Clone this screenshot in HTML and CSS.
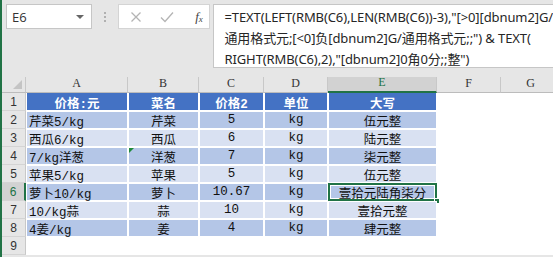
FILE: index.html
```html
<!DOCTYPE html>
<html>
<head>
<meta charset="utf-8">
<link rel="stylesheet" href="styles.css">
</head>
<body>
<div class="app">
  <div class="fbar">
    <div class="namebox"><span class="ref">E6</span><span class="caret"></span></div>
    <div class="dots"><i></i><i></i><i></i></div>
    <div class="btns">
      <svg class="ic" width="12" height="12" viewBox="0 0 12 12"><path d="M1.5 1.5L10.5 10.5M10.5 1.5L1.5 10.5" stroke="#b4b4b4" stroke-width="1.3" fill="none"/></svg>
      <svg class="ic" width="14" height="12" viewBox="0 0 14 12"><path d="M1 6.5L5 10.5L13 1.5" stroke="#b4b4b4" stroke-width="1.3" fill="none"/></svg>
      <span class="fx">f<sub>x</sub></span>
    </div>
    <div class="formula">
      <div>=TEXT(LEFT(RMB(C6),LEN(RMB(C6))-3),"[&gt;0][dbnum2]G/</div>
      <div>通用格式元;[&lt;0]负[dbnum2]G/通用格式元;;") &amp; TEXT(</div>
      <div>RIGHT(RMB(C6),2),"[dbnum2]0角0分;;整")</div>
    </div>
  </div>
  <div class="sheet">
    <div class="ch corner"><span class="tri"></span></div>
    <div class="ch">A</div><div class="ch">B</div><div class="ch">C</div><div class="ch">D</div><div class="ch sel">E</div><div class="ch">F</div><div class="ch">G</div>

    <div class="rh">1</div>
    <div class="c hd">价格:元</div><div class="c hd">菜名</div><div class="c hd">价格2</div><div class="c hd">单位</div><div class="c hd">大写</div><div class="c"></div><div class="c"></div>

    <div class="rh">2</div>
    <div class="c dk l">芹菜5/kg</div><div class="c dk">芹菜</div><div class="c dk">5</div><div class="c dk">kg</div><div class="c dk">伍元整</div><div class="c"></div><div class="c"></div>

    <div class="rh">3</div>
    <div class="c lt l">西瓜6/kg</div><div class="c lt">西瓜</div><div class="c lt">6</div><div class="c lt">kg</div><div class="c lt">陆元整</div><div class="c"></div><div class="c"></div>

    <div class="rh">4</div>
    <div class="c dk l">7/kg洋葱</div><div class="c dk err">洋葱</div><div class="c dk">7</div><div class="c dk">kg</div><div class="c dk">柒元整</div><div class="c"></div><div class="c"></div>

    <div class="rh">5</div>
    <div class="c lt l">苹果5/kg</div><div class="c lt">苹果</div><div class="c lt">5</div><div class="c lt">kg</div><div class="c lt">伍元整</div><div class="c"></div><div class="c"></div>

    <div class="rh sel">6</div>
    <div class="c dk l">萝卜10/kg</div><div class="c dk">萝卜</div><div class="c dk">10.67</div><div class="c dk">kg</div><div class="c dk active">壹拾元陆角柒分<span class="handle"></span></div><div class="c"></div><div class="c"></div>

    <div class="rh">7</div>
    <div class="c lt l">10/kg蒜</div><div class="c lt">蒜</div><div class="c lt">10</div><div class="c lt">kg</div><div class="c lt">壹拾元整</div><div class="c"></div><div class="c"></div>

    <div class="rh">8</div>
    <div class="c dk l">4姜/kg</div><div class="c dk">姜</div><div class="c dk">4</div><div class="c dk">kg</div><div class="c dk">肆元整</div><div class="c"></div><div class="c"></div>

    <div class="rh">9</div>
    <div class="c"></div><div class="c"></div><div class="c"></div><div class="c"></div><div class="c"></div><div class="c"></div><div class="c"></div>
  </div>
</div>
</body>
</html>
```
FILE: styles.css
```css
* { box-sizing: border-box; }
html, body { margin: 0; padding: 0; }
body {
  width: 553px;
  height: 257px;
  overflow: hidden;
  background: #e6e6e6;
  border-left: 2px solid #217346;
  font-family: "Noto Sans", sans-serif;
}
.app { display: flex; flex-direction: column; }
.fbar {
  height: 77px;
  display: flex;
  align-items: flex-start;
  padding: 4px 0 0 4px;
}
.namebox {
  width: 90px;
  height: 25px;
  background: #fff;
  border: 1px solid #c6c6c6;
  display: flex;
  align-items: center;
  justify-content: space-between;
  padding: 0 7px 0 5px;
}
.ref { font-family: "Open Sans", sans-serif; font-size: 13px; color: #333; }
.caret {
  width: 0; height: 0;
  border-left: 4px solid transparent;
  border-right: 4px solid transparent;
  border-top: 4px solid #666;
}
.dots {
  width: 28px;
  height: 25px;
  display: flex;
  flex-direction: column;
  align-items: center;
  justify-content: center;
  gap: 2px;
}
.dots i { display: block; width: 2px; height: 2px; background: #b0b0b0; }
.btns {
  width: 97px;
  height: 25px;
  background: #fff;
  border: 1px solid #d4d4d4;
  display: flex;
  align-items: center;
  padding-left: 11px;
  gap: 18px;
}
.fx {
  font-family: "Liberation Serif", serif;
  font-style: italic;
  font-size: 13px;
  color: #444;
  margin-left: 3px;
}
.fx sub { font-size: 9px; vertical-align: -1px; }
.formula {
  margin-left: 3px;
  flex: 1;
  height: 64px;
  background: #fff;
  border: 1px solid #c6c6c6;
  border-right: none;
  padding: 2px 0 0 10px;
  font-family: "Noto Sans", "Noto Sans CJK SC", sans-serif;
  font-size: 13px;
  letter-spacing: -0.1px;
  line-height: 21px;
  color: #262626;
  white-space: nowrap;
}
.sheet {
  display: grid;
  grid-template-columns: 24px 102px 71px 65px 64px 109px 64px 60px;
  grid-template-rows: 16px repeat(9, 18px);
  background: #fff;
}
.ch {
  background: #e6e6e6;
  font-family: "Liberation Serif", serif;
  font-size: 12px;
  color: #333;
  display: flex;
  align-items: flex-end;
  justify-content: center;
  padding-bottom: 1px;
  border-right: 1px solid #c8c8c8;
  border-bottom: 1px solid #bcbcbc;
}
.ch.sel {
  background: #d2d2d2;
  color: #217346;
  border-bottom: 2px solid #217346;
}
.corner { position: relative; }
.tri {
  position: absolute;
  right: 3px; bottom: 3px;
  width: 0; height: 0;
  border-left: 9px solid transparent;
  border-bottom: 9px solid #c4c4c4;
}
.rh {
  background: #e6e6e6;
  font-family: "Liberation Sans", sans-serif;
  font-size: 12px;
  color: #333;
  display: flex;
  align-items: center;
  justify-content: center;
  border-right: 1px solid #c8c8c8;
  border-bottom: 1px solid #d4d4d4;
}
.rh.sel {
  background: #d2d2d2;
  color: #217346;
  border-right: 2px solid #217346;
}
.c {
  font-family: "Liberation Mono", "Noto Sans CJK SC", monospace;
  font-size: 12.5px;
  color: #111;
  display: flex;
  align-items: center;
  justify-content: center;
  white-space: nowrap;
  position: relative;
}
.c.l { justify-content: flex-start; padding-left: 3px; }
.hd {
  background: #4472c4;
  color: #fff;
  font-weight: bold;
  box-shadow: inset -1px 0 0 #fff, inset 1px 0 0 #fff, inset 0 -1px 0 #fff;
}
.dk { background: #b4c6e7; box-shadow: inset 0 0 0 1px #fff; }
.lt { background: #d9e1f2; box-shadow: inset 0 0 0 1px #fff; }
.err::before {
  content: "";
  position: absolute;
  left: 1px; top: 1px;
  border-right: 5px solid transparent;
  border-top: 5px solid #1e8a3a;
}
.active {
  box-shadow: inset 0 0 0 2px #217346, inset 0 0 0 3px #fff;
}
.handle {
  position: absolute;
  right: -3px;
  bottom: -3px;
  width: 6px;
  height: 6px;
  background: #217346;
  border: 1px solid #fff;
}
```
